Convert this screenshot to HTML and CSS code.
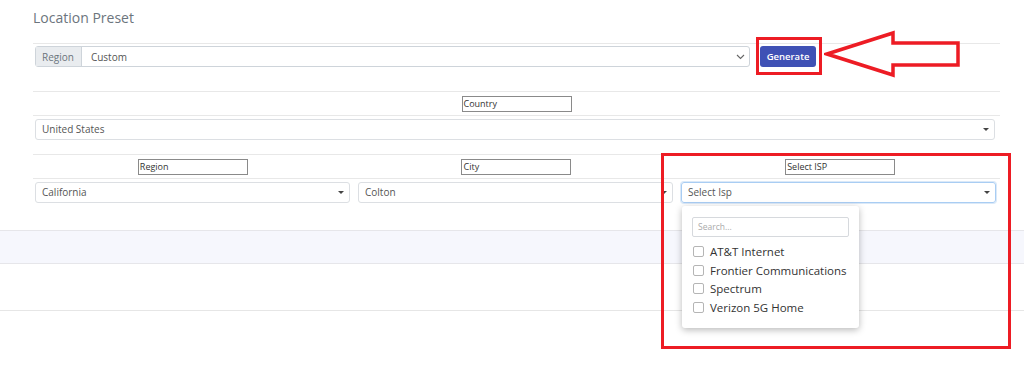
FILE: index.html
```html
<!DOCTYPE html>
<html lang="en">
<head>
<meta charset="UTF-8" />
<title>Location Preset</title>
<link rel="stylesheet" href="styles.css">
</head>
<body>

<div class="page">
    <h3 class="title">Location Preset</h3>

    <!-- preset row -->
    <div class="preset-row">
        <div class="input-group">
            <span class="addon">Region</span>
            <span class="group-value">Custom</span>
            <svg class="chevron" width="9" height="6" viewBox="0 0 9 6"><path d="M1 1l3.5 3.5L8 1" fill="none" stroke="#666" stroke-width="1.1"/></svg>
        </div>
        <button class="btn-generate">Generate</button>
    </div>

    <!-- country -->
    <div class="label-row">
        <div class="label-cell"><span class="field-label">Country</span></div>
    </div>
    <div class="select-row single">
        <div class="select">United States<span class="caret"></span></div>
    </div>

    <!-- region / city / isp -->
    <div class="label-row triple">
        <div class="label-cell"><span class="field-label">Region</span></div>
        <div class="label-cell"><span class="field-label">City</span></div>
        <div class="label-cell"><span class="field-label">Select ISP</span></div>
    </div>
    <div class="select-row triple">
        <div class="select">California<span class="caret"></span></div>
        <div class="select">Colton<span class="caret"></span></div>
        <div class="select-wrap">
            <div class="select focused">Select Isp<span class="caret"></span></div>
            <div class="dropdown">
                <div class="search">Search...</div>
                <label class="option"><span class="check"></span>AT&amp;T Internet</label>
                <label class="option"><span class="check"></span>Frontier Communications</label>
                <label class="option"><span class="check"></span>Spectrum</label>
                <label class="option"><span class="check"></span>Verizon 5G Home</label>
            </div>
        </div>
    </div>
</div>

<div class="band"></div>
<div class="spacer"></div>

<!-- annotations -->
<div class="mark mark-btn"></div>
<div class="mark mark-isp"></div>
<svg class="arrow" width="140" height="50" viewBox="824 30 140 50">
    <polygon points="827,54 893,33 893,43 958,43 958,65 893,65 893,75" fill="#fff" stroke="#ed1c24" stroke-width="3.5" stroke-linejoin="miter"/>
</svg>

</body>
</html>
```

FILE: styles.css
```css
html, body {
    min-height: 365px;
}
body {
    margin: 0;
    font-family: 'Open Sans', 'Noto Sans', sans-serif;
    color: #495057;
    background: #fff;
    position: relative;
}
.page {
    width: 967px;
    margin-left: 33px;
    position: relative;
    z-index: 3;
}
.title {
    margin: 0;
    height: 43px;
    padding-top: 8px;
    box-sizing: border-box;
    font-size: 14px;
    font-weight: 400;
    color: #6c757d;
}
.preset-row {
    border-top: 1px solid #e8e8e8;
    height: 48px;
    box-sizing: border-box;
    padding: 2px 0 0 2px;
    display: flex;
    align-items: flex-start;
    gap: 10px;
}
.input-group {
    width: 715px;
    height: 21px;
    display: flex;
    align-items: center;
    border: 1px solid #ced4da;
    border-radius: 3px;
    box-sizing: border-box;
    font-size: 10px;
}
.addon {
    background: #e9ecef;
    color: #6c757d;
    height: 100%;
    padding: 0 7px 0 6px;
    display: flex;
    align-items: center;
    border-right: 1px solid #ced4da;
}
.group-value {
    flex: 1;
    padding-left: 9px;
    color: #555;
}
.chevron {
    margin-right: 4px;
}
.btn-generate {
    width: 56px;
    height: 21px;
    background: #3f51b5;
    color: #fff;
    border: none;
    border-radius: 3px;
    font-family: inherit;
    font-size: 9.5px;
    font-weight: 600;
    padding: 0;
}
.label-row {
    border-top: 1px solid #e8e8e8;
    border-bottom: 1px solid #e8e8e8;
    height: 25px;
    box-sizing: border-box;
    display: flex;
    align-items: center;
}
.label-row.triple {
    display: grid;
    grid-template-columns: repeat(3, 1fr);
    margin-top: 14px;
    padding: 0 2px;
    gap: 8px;
}
.label-cell {
    flex: 1;
    display: flex;
    justify-content: center;
}
.field-label {
    width: 110px;
    height: 16px;
    box-sizing: border-box;
    border: 1px solid #8a8a8a;
    font-size: 9px;
    line-height: 14px;
    padding-left: 1px;
    color: #333;
    background: #fff;
}
.select-row {
    padding: 3px 2px 0 2px;
}
.select-row.single {
    padding-right: 5px;
}
.select-row.triple {
    display: grid;
    grid-template-columns: repeat(3, 1fr);
    gap: 8px;
    padding-right: 4px;
}
.select {
    height: 21px;
    box-sizing: border-box;
    border: 1px solid #dcdfe3;
    border-radius: 3px;
    font-size: 10px;
    line-height: 19px;
    padding-left: 6px;
    color: #555;
    position: relative;
}
.select.focused {
    border-color: #a9cdf3;
    box-shadow: 0 0 0 1px #dbe9f8;
}
.caret {
    position: absolute;
    right: 5px;
    top: 8px;
    border-left: 3px solid transparent;
    border-right: 3px solid transparent;
    border-top: 3px solid #444;
}
.select-wrap {
    position: relative;
}
.dropdown {
    position: absolute;
    left: 1px;
    top: 24px;
    width: 177px;
    height: 122px;
    box-sizing: border-box;
    background: #fff;
    border-radius: 3px;
    box-shadow: 0 2px 7px rgba(0,0,0,0.28);
    padding: 11px 10px 0 10px;
    z-index: 2;
}
.search {
    height: 20px;
    box-sizing: border-box;
    border: 1px solid #d6d9dd;
    border-radius: 2px;
    font-size: 8.5px;
    line-height: 18px;
    padding-left: 5px;
    color: #aaa;
    margin-bottom: 5px;
}
.option {
    display: flex;
    align-items: center;
    height: 18.7px;
    font-size: 11.5px;
    color: #333;
}
.check {
    width: 9px;
    height: 9px;
    border: 1px solid #b5b5b5;
    border-radius: 2px;
    margin: 0 6px 0 1px;
}
.band {
    margin-top: 27px;
    height: 34px;
    box-sizing: border-box;
    background: #f6f7fd;
    border-top: 1px solid #e6e6ea;
    border-bottom: 1px solid #e6e6ea;
}
.spacer {
    height: 46px;
    border-bottom: 1px solid #e6e6e6;
}
.mark {
    position: absolute;
    border: 3px solid #ed1c24;
    box-sizing: border-box;
    z-index: 4;
}
.mark-btn {
    left: 756px;
    top: 37px;
    width: 66px;
    height: 38px;
}
.mark-isp {
    left: 661px;
    top: 153px;
    width: 350px;
    height: 196px;
    border-width: 3.5px;
}
.arrow {
    position: absolute;
    left: 824px;
    top: 30px;
    z-index: 4;
}
```
